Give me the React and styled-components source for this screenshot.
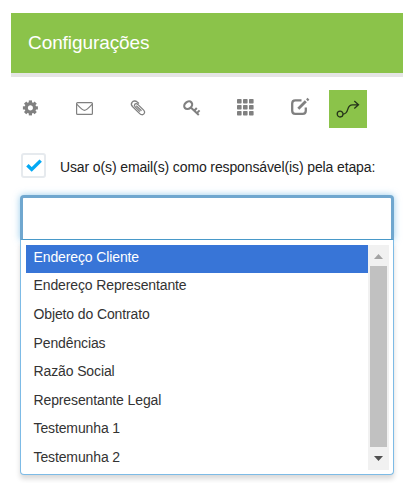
import React, { useState } from "react";
import styled, { createGlobalStyle } from "styled-components";

const GlobalStyle = createGlobalStyle`
  * { box-sizing: border-box; }
  body {
    margin: 0;
    background: #fff;
    font-family: "Liberation Sans", Arial, sans-serif;
    color: #222;
  }
`;

const Panel = styled.main`
  width: 416px;
  height: 483px;
  padding-top: 13px;
  overflow: hidden;
`;

const Header = styled.header`
  display: flex;
  align-items: center;
  width: 392px;
  height: 64px;
  margin-left: 11px;
  padding-left: 17px;
  background: #8bc34a;
  border-bottom: 4px solid #e5e5e5;
`;

const Title = styled.h1`
  margin: 0;
  font-size: 19px;
  font-weight: 400;
  line-height: 24px;
  letter-spacing: -0.08px;
  color: #fff;
`;

const Toolbar = styled.nav`
  display: flex;
  align-items: center;
  height: 38px;
  margin: 13px 0 0 4px;
`;

const Tool = styled.button`
  display: flex;
  align-items: center;
  justify-content: center;
  width: ${(p) => (p.$active ? 38 : 54)}px;
  height: 38px;
  margin-left: ${(p) => (p.$active ? 1 : 0)}px;
  padding: 0 0 ${(p) => (p.$active ? 0 : 2)}px;
  border: 0;
  color: ${(p) => (p.$active ? "#25331a" : "#808080")};
  background: ${(p) => (p.$active ? "#8bc34a" : "transparent")};
`;

const Icon = styled.svg`
  display: block;
  width: 24px;
  height: 24px;
  fill: none;
  stroke: currentColor;
`;

const CheckRow = styled.label`
  display: flex;
  align-items: center;
  gap: 14px;
  height: 25px;
  margin: 25px 0 0 21px;
  font-size: 14px;
  letter-spacing: -0.12px;
`;

const CheckBox = styled.span`
  display: flex;
  width: 25px;
  height: 25px;
  flex: none;
  border: 2px solid #e6eaee;
  border-radius: 3px;
`;

const CheckMark = styled.svg`
  width: 21px;
  height: 21px;
  fill: none;
  stroke: #03a9f4;
  stroke-width: 3.4;
`;

const LabelText = styled.span`
  white-space: nowrap;
  padding-top: 2px;
`;

const Select = styled.div`
  width: 374px;
  margin: 17px 0 0 20px;
`;

const Field = styled.div`
  height: 45px;
  border: 3px solid #70a7cf;
  border-width: 3px 3px 1px;
  border-bottom-color: #4a9aca;
  border-radius: 4px 4px 0 0;
  background: #fff;
  box-shadow: 0 0 7px rgba(82, 168, 222, 0.6);
`;

const Menu = styled.div`
  position: relative;
  display: flex;
  height: 235px;
  padding: 5px 4px 4px 5px;
  border: 1px solid #7dbbe6;
  border-top: 0;
  border-radius: 0 0 4px 4px;
  background: #fff;
  box-shadow: 0 4px 5px rgba(0, 0, 0, 0.15);
`;

const Options = styled.ul`
  flex: 1;
  margin: 0;
  padding: 0;
  list-style: none;
`;

const Option = styled.li`
  height: 28px;
  margin-bottom: 0.57px;
  padding: 3.9px 0 0 7.5px;
  font-size: 14px;
  line-height: 17px;
  letter-spacing: -0.12px;
  color: ${(p) => (p.$selected ? "#fff" : "#333")};
  background: ${(p) => (p.$selected ? "#3875d7" : "transparent")};
`;

const ScrollTrack = styled.div`
  display: flex;
  flex-direction: column;
  align-items: center;
  width: 21px;
  height: 225px;
  background: #f1f1f1;
`;

const Arrow = styled.svg`
  width: 21px;
  height: ${(p) => p.$height}px;
  fill: ${(p) => p.$tone};
`;

const Thumb = styled.div`
  width: 17px;
  height: 181px;
  background: #c1c1c1;
`;

const options = [
  "Endereço Cliente",
  "Endereço Representante",
  "Objeto do Contrato",
  "Pendências",
  "Razão Social",
  "Representante Legal",
  "Testemunha 1",
  "Testemunha 2",
];

const teeth = [0, 45, 90, 135, 180, 225, 270, 315];

const GearIcon = () => (
  <Icon viewBox="0 0 24 24">
    <g transform="translate(11.4 11.9)">
      <circle r="4.2" strokeWidth="3.3" />
      {teeth.map((a) => (
        <rect key={a} x="-1.6" y="-7.5" width="3.2" height="3" fill="currentColor" stroke="none" transform={`rotate(${a})`} />
      ))}
    </g>
  </Icon>
);

const MailIcon = () => (
  <Icon viewBox="0 0 24 24" strokeWidth="1.2">
    <rect x="3.6" y="6.6" width="15.8" height="11.8" rx="1" />
    <path d="M3.8 8.2 C6 10.5 9.5 14.3 11.5 14.3 S17 10.5 19.2 8.2" />
  </Icon>
);

const ClipIcon = () => (
  <Icon viewBox="0 0 24 24" strokeWidth="1.3">
    <path d="M12 7.5 L10.2 5.9 C8.4 4.4 6.1 4.9 5 6.3 C3.9 7.8 4.4 9.5 5.7 10.8 L12.7 17.6 C14.2 19 15.8 19.1 16.9 17.9 C18.1 16.7 17.7 15.2 16.4 13.9 L10.8 8.4 C9.8 7.5 8.5 7.4 7.8 8.2 C7.1 9 7.4 10.1 8.2 10.9 L13 15.6" />
    <path d="M9.3 9.7 L14.5 14.7" />
  </Icon>
);

const KeyIcon = () => (
  <Icon viewBox="0 0 24 24">
    <ellipse cx="7.2" cy="9.2" rx="4.3" ry="3.4" strokeWidth="2.2" transform="rotate(-40 7.2 9.2)" />
    <path d="M9.8 11.4 L17.8 19 M13 15 L15.8 12 M15.6 17.4 L18.6 14.4" strokeWidth="2" />
  </Icon>
);

const GridIcon = () => (
  <Icon viewBox="0 0 24 24">
    {[3, 9, 15].map((y) =>
      [2, 8, 14].map((x) => (
        <rect key={`${x}-${y}`} x={x} y={y} width="4.6" height="4.5" rx="0.7" fill="currentColor" stroke="none" />
      ))
    )}
  </Icon>
);

const EditIcon = () => (
  <Icon viewBox="0 0 24 24">
    <path d="M12.5 4.3 H6.3 Q3.2 4.3 3.2 7.4 V14.8 Q3.2 17.9 6.3 17.9 H13.7 Q16.8 17.9 16.8 14.8 V11.5" strokeWidth="2.3" />
    <path d="M9.3 12.8 L16.8 5.3" strokeWidth="2.8" />
    <path d="M17.9 4.2 L19.5 2.8" strokeWidth="2.6" />
  </Icon>
);

const RouteIcon = () => (
  <Icon viewBox="0 0 24 24" strokeWidth="1.3">
    <circle cx="4.1" cy="17.1" r="2.9" />
    <path d="M7 17.1 C14 17 9.5 7.8 16.5 7.8 H22.2 M18.3 4 L22.5 7.8 L18.3 11.6" />
  </Icon>
);

const tools = [
  { name: "Geral", Glyph: GearIcon },
  { name: "Email", Glyph: MailIcon },
  { name: "Anexos", Glyph: ClipIcon },
  { name: "Acesso", Glyph: KeyIcon },
  { name: "Campos", Glyph: GridIcon },
  { name: "Editar", Glyph: EditIcon },
  { name: "Etapa", Glyph: RouteIcon, active: true },
];

export default function App() {
  const [selected, setSelected] = useState(0);
  return (
    <>
      <GlobalStyle />
      <Panel>
        <Header>
          <Title>Configurações</Title>
        </Header>
        <Toolbar>
          {tools.map(({ name, Glyph, active }) => (
            <Tool key={name} aria-label={name} $active={active}>
              <Glyph />
            </Tool>
          ))}
        </Toolbar>
        <CheckRow>
          <CheckBox>
            <CheckMark viewBox="0 0 21 21">
              <path d="M4.4 10.2 L8.7 14.4 L17.7 5.6" />
            </CheckMark>
          </CheckBox>
          <LabelText>Usar o(s) email(s) como responsável(is) pela etapa:</LabelText>
        </CheckRow>
        <Select>
          <Field />
          <Menu>
            <Options>
              {options.map((text, i) => (
                <Option key={text} $selected={i === selected} onClick={() => setSelected(i)}>
                  {text}
                </Option>
              ))}
            </Options>
            <ScrollTrack>
              <Arrow viewBox="0 0 21 21" $height={21} $tone="#a3a3a3">
                <path d="M6 14 L10.5 9 L15 14 Z" />
              </Arrow>
              <Thumb />
              <Arrow viewBox="0 0 21 23" $height={23} $tone="#505050">
                <path d="M6 9 L10.5 14 L15 9 Z" />
              </Arrow>
            </ScrollTrack>
          </Menu>
        </Select>
      </Panel>
    </>
  );
}
